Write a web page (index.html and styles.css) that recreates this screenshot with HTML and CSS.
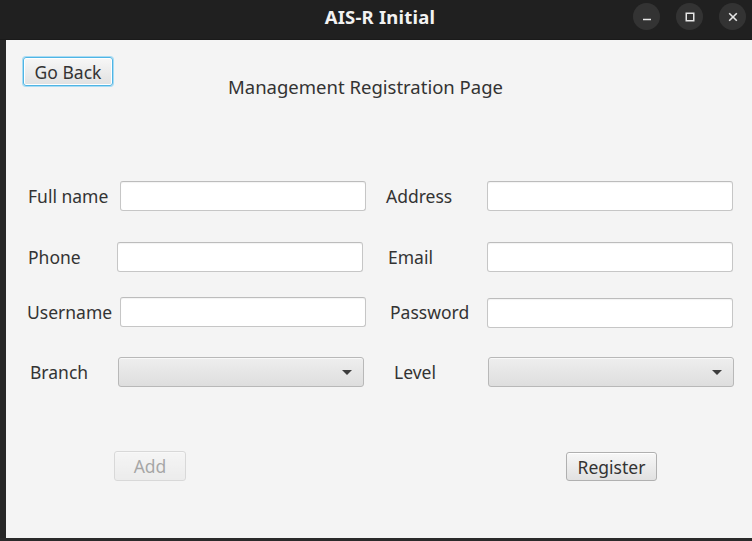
FILE: index.html
```html
<!DOCTYPE html>
<html>
<head>
<meta charset="utf-8">
<link rel="stylesheet" href="styles.css">
</head>
<body>
<div class="window">
  <header class="titlebar">
    <div class="title">AIS-R Initial</div>
    <div class="controls">
      <span class="ctl"><svg width="12" height="12" viewBox="0 0 12 12"><path d="M2 8.5h8" stroke="#e6e6e6" stroke-width="1.5"/></svg></span>
      <span class="ctl"><svg width="12" height="12" viewBox="0 0 12 12"><rect x="2.25" y="2.25" width="7.5" height="7.5" fill="none" stroke="#e6e6e6" stroke-width="1.5"/></svg></span>
      <span class="ctl"><svg width="12" height="12" viewBox="0 0 12 12"><path d="M2.2 2.2l7.6 7.6M9.8 2.2l-7.6 7.6" stroke="#e6e6e6" stroke-width="1.6"/></svg></span>
    </div>
  </header>
  <main class="content">
    <div class="head">
      <button class="btn focused">Go Back</button>
      <div class="page-title">Management Registration Page</div>
    </div>
    <div class="form">
      <div class="row r1">
        <label class="lbl">Full name</label>
        <input class="field" type="text">
        <label class="lbl rlbl">Address</label>
        <input class="field" type="text">
      </div>
      <div class="row r2">
        <label class="lbl">Phone</label>
        <input class="field nudge-l3" type="text">
        <label class="lbl rlbl n2">Email</label>
        <input class="field" type="text">
      </div>
      <div class="row r3">
        <label class="lbl n-1">Username</label>
        <input class="field" type="text">
        <label class="lbl rlbl n4">Password</label>
        <input class="field down1" type="text">
      </div>
      <div class="row r4">
        <label class="lbl n2">Branch</label>
        <div class="combo nudge-l2"><span class="arrow"></span></div>
        <label class="lbl rlbl n8">Level</label>
        <div class="combo nudge-r1"><span class="arrow"></span></div>
      </div>
    </div>
    <div class="actions">
      <button class="btn disabled">Add</button>
      <button class="btn register">Register</button>
    </div>
  </main>
  <div class="bottom-edge"></div>
</div>
</body>
</html>
```
FILE: styles.css
```css
* { box-sizing: border-box; }
html, body { margin: 0; padding: 0; }
body {
  width: 752px;
  height: 541px;
  background: #262626;
  overflow: hidden;
  font-family: "Noto Sans", "Open Sans", sans-serif;
}
.window {
  display: flex;
  flex-direction: column;
  height: 541px;
}
.titlebar {
  height: 40px;
  background: #202020;
  position: relative;
  display: flex;
  align-items: center;
  justify-content: center;
  border-bottom: 1px solid #1a1a1a;
}
.title {
  color: #f2f2f2;
  font-family: "Noto Sans", sans-serif;
  font-weight: 700;
  font-size: 18.5px;
  letter-spacing: 0.2px;
  margin-top: -6px;
  margin-left: 8px;
}
.controls {
  position: absolute;
  right: 6px;
  top: 3px;
  display: flex;
  gap: 16px;
}
.ctl {
  width: 27px;
  height: 27px;
  border-radius: 50%;
  background: #333333;
  display: flex;
  align-items: center;
  justify-content: center;
}
.content {
  margin-left: 6px;
  height: 498px;
  background: #f4f4f4;
  padding: 17px 0 0 17px;
}
.bottom-edge {
  height: 3px;
  background: #2a2a2a;
}
.head {
  display: flex;
  align-items: flex-start;
}
.btn {
  font-family: "Noto Sans", "Open Sans", sans-serif;
  font-size: 17.5px;
  color: #333;
  height: 30px;
  padding: 0;
  border: 1px solid #b0b0b0;
  border-radius: 3px;
  background: linear-gradient(#f7f7f7, #e1e1e1);
  box-shadow: inset 0 1px 0 #ffffff;
  line-height: 26px;
}
.btn.focused {
  width: 90px;
  height: 29px;
  border: 1px solid #4fb5e5;
  box-shadow: 0 0 0 1px #a8dbf3, inset 0 0 0 1px #ffffff;
}
.page-title {
  margin-left: 115px;
  margin-top: 17px;
  line-height: 26px;
  font-size: 18.5px;
  color: #333;
}
.form {
  margin-top: 81px;
  margin-left: 5px;
}
.row {
  display: flex;
  align-items: center;
  height: 30px;
}
.r2 { margin-top: 31px; }
.r3 { margin-top: 25px; }
.r4 { margin-top: 30px; }
.lbl {
  width: 92px;
  font-size: 17.5px;
  color: #333;
  line-height: 22px;
}
.rlbl {
  width: 121px;
  padding-left: 20px;
}
.n-1 { padding-left: 0; margin-left: -1px; width: 93px; }
.n2 { padding-left: 2px; }
.rlbl.n2 { padding-left: 22px; }
.rlbl.n4 { padding-left: 24px; }
.rlbl.n8 { padding-left: 28px; }
.field {
  width: 246px;
  height: 30px;
  border: 1px solid #c6c6c6;
  border-top-color: #bcbcbc;
  border-radius: 3px;
  background: #ffffff;
  box-shadow: inset 0 1px 1px rgba(0,0,0,0.05);
  margin: 0;
}
.nudge-l3 { margin-left: -3px; margin-right: 3px; }
.nudge-l2 { margin-left: -2px; margin-right: 2px; }
.nudge-r1 { margin-left: 1px; }
.down1 { margin-top: 2px; }
.combo {
  width: 246px;
  height: 30px;
  border: 1px solid #b8b8b8;
  border-radius: 3px;
  background: linear-gradient(#eeeeee, #dedede);
  box-shadow: inset 0 1px 0 #f8f8f8;
  display: flex;
  align-items: center;
  justify-content: flex-end;
  padding-right: 11px;
}
.arrow {
  width: 0;
  height: 0;
  border-left: 5px solid transparent;
  border-right: 5px solid transparent;
  border-top: 5px solid #3d3d3d;
}
.actions {
  margin-top: 64px;
  margin-left: 91px;
  display: flex;
  align-items: flex-start;
}
.btn.disabled {
  width: 72px;
  opacity: 0.4;
}
.btn.register {
  width: 91px;
  height: 29px;
  margin-top: 1px;
  margin-left: 380px;
}
```
